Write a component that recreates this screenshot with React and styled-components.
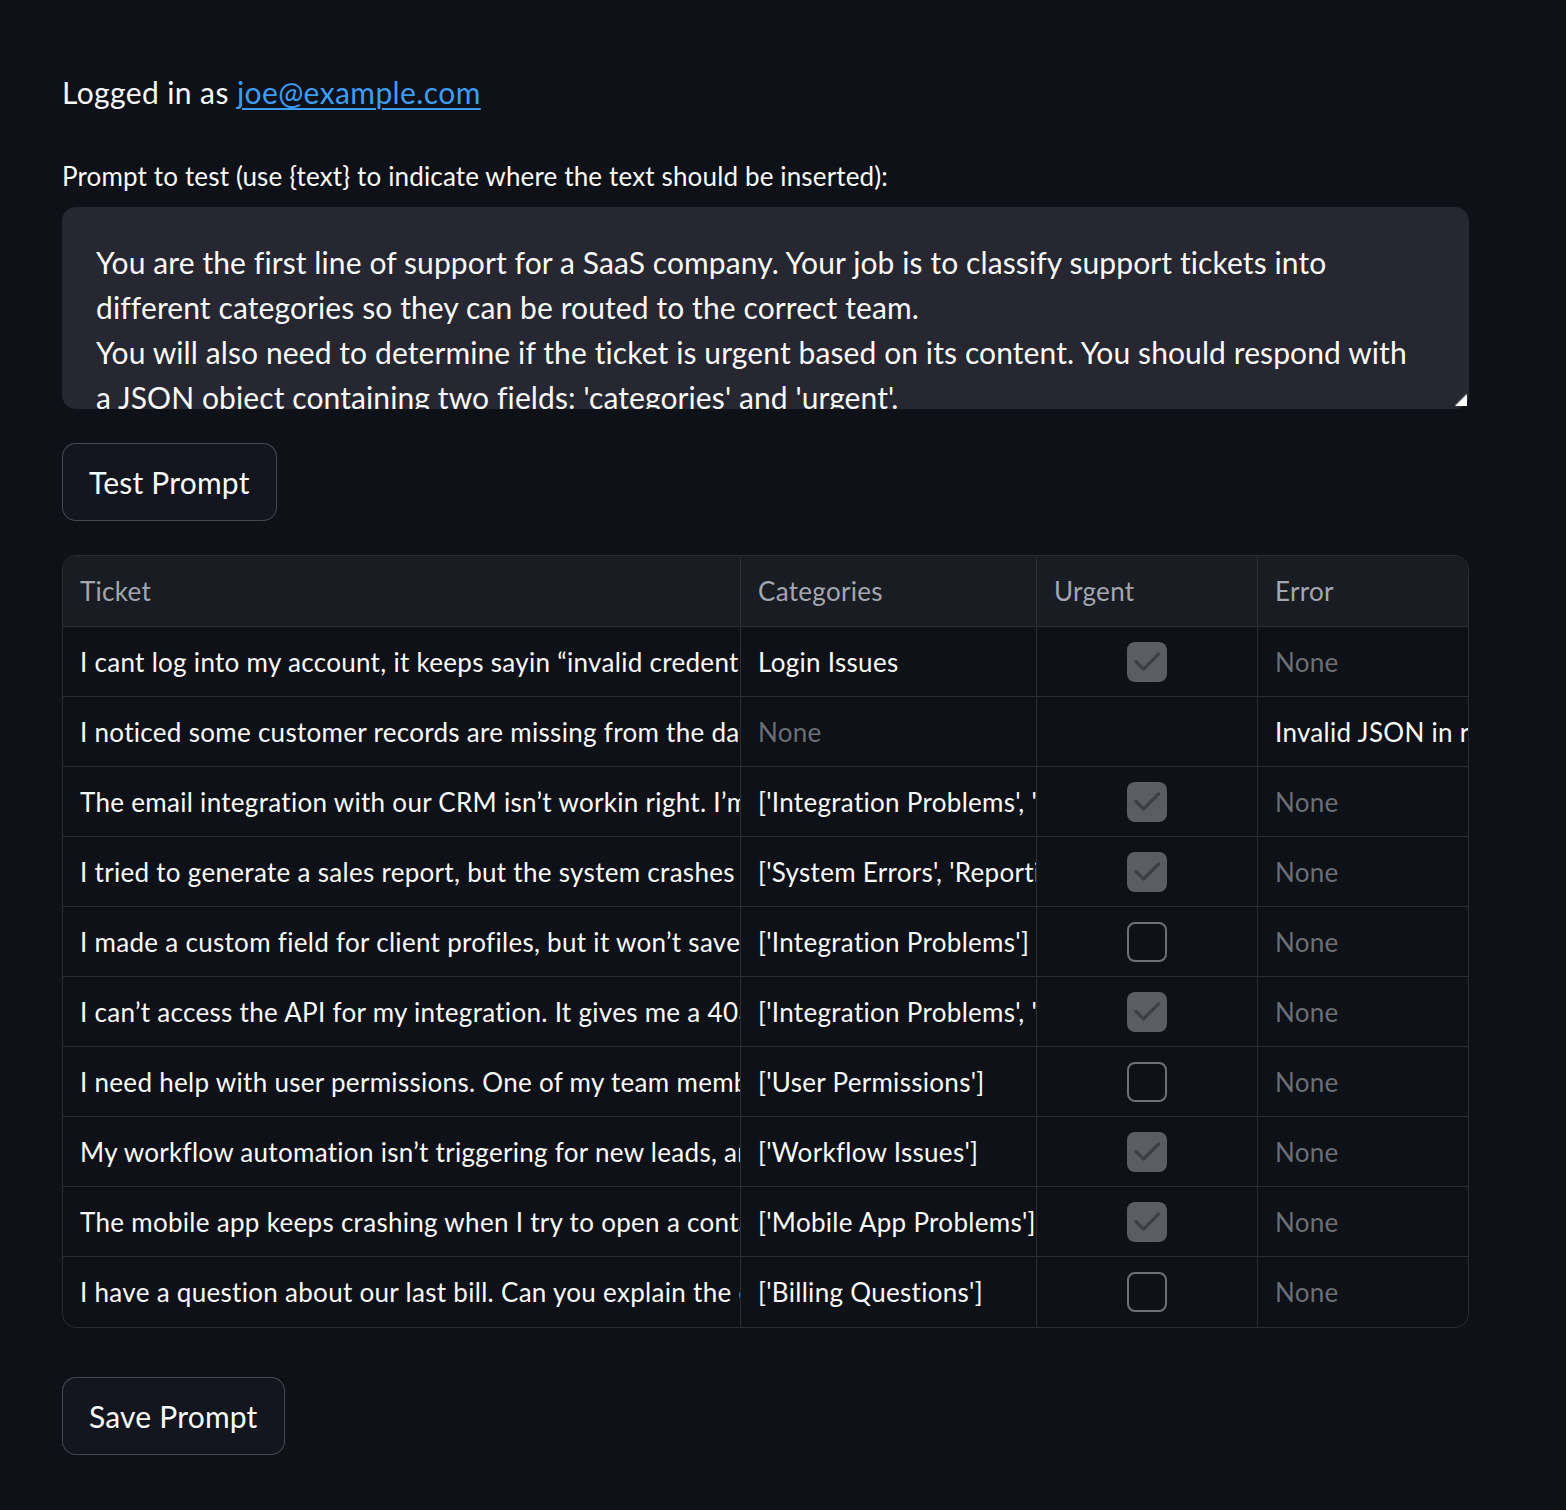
import React from "react";
import styled, { createGlobalStyle } from "styled-components";

const GlobalStyle = createGlobalStyle`
  html, body {
    margin: 0;
    padding: 0;
    background: #0e1117;
  }
  body {
    font-family: "Lato", "Liberation Sans", sans-serif;
    color: #fafafa;
  }
`;

const Page = styled.div`
  min-height: 1510px;
  box-sizing: border-box;
  padding: 70px 97px 60px 62px;
  background: #0e1117;
`;

const Greeting = styled.p`
  margin: 0;
  font-size: 30px;
  letter-spacing: 0.4px;
  line-height: 45px;
  color: #fafafa;

  a {
    color: #3d9df3;
    text-decoration: underline;
    text-underline-offset: 4px;
    text-decoration-thickness: 2px;
  }
`;

const Label = styled.label`
  display: block;
  margin-top: 47px;
  font-size: 26px;
  letter-spacing: 0.15px;
  line-height: 28px;
  color: #fafafa;
`;

const AreaWrap = styled.div`
  position: relative;
  margin-top: 17px;

  &::after {
    content: "";
    position: absolute;
    right: 2px;
    bottom: 3px;
    width: 0;
    height: 0;
    border-left: 12px solid transparent;
    border-bottom: 12px solid #ffffff;
    filter: drop-shadow(-1px -1px 0 #45464e);
  }
`;

const PromptArea = styled.textarea`
  display: block;
  width: 100%;
  height: 202px;
  box-sizing: border-box;
  margin: 0;
  padding: 33px 46px 0 34px;
  border: none;
  border-radius: 14px;
  background: #262730;
  color: #fafafa;
  font-family: inherit;
  font-size: 30px;
  letter-spacing: 0.1px;
  line-height: 45px;
  resize: none;
  overflow: hidden;
  outline: none;
`;

const Button = styled.button`
  display: inline-flex;
  align-items: center;
  height: 78px;
  box-sizing: border-box;
  padding: 0 26px;
  margin-top: ${(p) => p.$top}px;
  border: 1.5px solid rgba(250, 250, 250, 0.22);
  border-radius: 14px;
  background: #13161e;
  color: #fafafa;
  font-family: inherit;
  font-size: 30px;
  letter-spacing: 0.2px;
  cursor: pointer;
`;

const Table = styled.div`
  margin-top: 34px;
  display: grid;
  grid-template-columns: 678px 296px 221px 1fr;
  border: 1.5px solid #2b2d35;
  border-radius: 14px;
  overflow: hidden;
`;

const HeadCell = styled.div`
  height: 71px;
  box-sizing: border-box;
  display: flex;
  align-items: center;
  padding-left: 17px;
  background: #1a1c24;
  color: #a3a6ae;
  font-size: 26px;
  letter-spacing: 0.3px;
  border-bottom: 1.5px solid #2b2d35;
  border-right: ${(p) => (p.$last ? "none" : "1.5px solid #2b2d35")};
`;

const Cell = styled.div`
  height: 70px;
  box-sizing: border-box;
  display: flex;
  align-items: center;
  justify-content: ${(p) => (p.$center ? "center" : "flex-start")};
  padding-left: ${(p) => (p.$center ? 0 : 17)}px;
  overflow: hidden;
  white-space: nowrap;
  font-size: 26px;
  letter-spacing: 0.3px;
  color: ${(p) => (p.$muted ? "#6c6e75" : "#fafafa")};
  border-bottom: ${(p) => (p.$bottom ? "none" : "1.5px solid #2b2d35")};
  border-right: ${(p) => (p.$last ? "none" : "1.5px solid #2b2d35")};
`;

const Box = styled.span`
  width: 40px;
  height: 40px;
  box-sizing: border-box;
  border-radius: 8px;
  display: flex;
  align-items: center;
  justify-content: center;
  background: ${(p) => (p.$checked ? "#5b5d63" : "transparent")};
  border: ${(p) => (p.$checked ? "none" : "2px solid #6e7076")};
`;

const Checkbox = ({ checked }) => (
  <Box $checked={checked}>
    {checked && (
      <svg width="40" height="40" viewBox="0 0 40 40">
        <path
          d="M9 19.5 L16.5 27 L31.5 12"
          fill="none"
          stroke="#3e4046"
          strokeWidth="3.2"
          strokeLinecap="round"
          strokeLinejoin="round"
        />
      </svg>
    )}
  </Box>
);

const prompt =
  "You are the first line of support for a SaaS company. Your job is to classify support tickets into different categories so they can be routed to the correct team.\n" +
  "You will also need to determine if the ticket is urgent based on its content. You should respond with a JSON object containing two fields: 'categories' and 'urgent'.\n" +
  "The categories are: Login Issues, Integration Problems, System Errors, Reporting Issues, User Permissions, Workflow Issues, Mobile App Problems, Billing Questions.\n\n" +
  "Ticket: {text}";

const rows = [
  {
    ticket:
      "I cant log into my account, it keeps sayin “invalid credentials” even tho I’m sure I’m using the right password.",
    cats: "Login Issues",
    urgent: true,
    error: null,
  },
  {
    ticket:
      "I noticed some customer records are missing from the database after the last update.",
    cats: null,
    urgent: undefined,
    error: "Invalid JSON in response",
  },
  {
    ticket:
      "The email integration with our CRM isn’t workin right. I’m not getting any of the emails synced.",
    cats: "['Integration Problems', 'Workflow Issues']",
    urgent: true,
    error: null,
  },
  {
    ticket:
      "I tried to generate a sales report, but the system crashes every time I click export.",
    cats: "['System Errors', 'Reporting Issues']",
    urgent: true,
    error: null,
  },
  {
    ticket:
      "I made a custom field for client profiles, but it won’t save when I enter data.",
    cats: "['Integration Problems']",
    urgent: false,
    error: null,
  },
  {
    ticket:
      "I can’t access the API for my integration. It gives me a 403 error every time.",
    cats: "['Integration Problems', 'System Errors']",
    urgent: true,
    error: null,
  },
  {
    ticket:
      "I need help with user permissions. One of my team members can’t see the reports.",
    cats: "['User Permissions']",
    urgent: false,
    error: null,
  },
  {
    ticket:
      "My workflow automation isn’t triggering for new leads, and we are losing sales.",
    cats: "['Workflow Issues']",
    urgent: true,
    error: null,
  },
  {
    ticket:
      "The mobile app keeps crashing when I try to open a contact on my phone.",
    cats: "['Mobile App Problems']",
    urgent: true,
    error: null,
  },
  {
    ticket:
      "I have a question about our last bill. Can you explain the charges for extra users?",
    cats: "['Billing Questions']",
    urgent: false,
    error: null,
  },
];

export default function App() {
  return (
    <Page>
      <GlobalStyle />
      <Greeting>
        Logged in as <a href="mailto:joe@example.com">joe@example.com</a>
      </Greeting>
      <Label htmlFor="prompt">
        Prompt to test (use {"{text}"} to indicate where the text should be
        inserted):
      </Label>
      <AreaWrap>
        <PromptArea id="prompt" defaultValue={prompt} />
      </AreaWrap>
      <Button $top={34}>Test Prompt</Button>
      <Table>
        <HeadCell>Ticket</HeadCell>
        <HeadCell>Categories</HeadCell>
        <HeadCell>Urgent</HeadCell>
        <HeadCell $last>Error</HeadCell>
        {rows.map((r, i) => {
          const bottom = i === rows.length - 1;
          return (
            <React.Fragment key={i}>
              <Cell $bottom={bottom}>{r.ticket}</Cell>
              <Cell $bottom={bottom} $muted={!r.cats}>
                {r.cats || "None"}
              </Cell>
              <Cell $bottom={bottom} $center>
                {r.urgent !== undefined && <Checkbox checked={r.urgent} />}
              </Cell>
              <Cell $bottom={bottom} $last $muted={!r.error}>
                {r.error || "None"}
              </Cell>
            </React.Fragment>
          );
        })}
      </Table>
      <Button $top={49}>Save Prompt</Button>
    </Page>
  );
}
